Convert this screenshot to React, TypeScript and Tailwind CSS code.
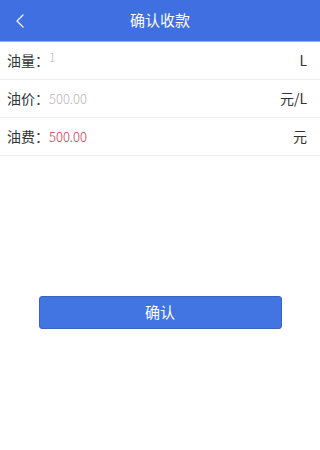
import { ChevronLeft } from "lucide-react";

const rows = [
  { label: "油量：", value: "1", unit: "L", tone: "text-[#b8b8b8]", lift: true },
  { label: "油价：", value: "500.00", unit: "元/L", tone: "text-[#b8b8b8]", lift: false },
  { label: "油费：", value: "500.00", unit: "元", tone: "text-[#c8354e]", lift: false },
];

export default function App() {
  return (
    <div
      className="min-h-[450px] w-full bg-white"
      style={{ fontFamily: '"Noto Sans CJK SC", "Noto Sans", sans-serif' }}
    >
      <header className="relative flex h-[42px] items-center justify-center border-b border-[#8fb0ee] bg-[#3f6fe0]">
        <button className="absolute left-1 top-0 flex h-full items-center px-1 text-white">
          <ChevronLeft size={24} strokeWidth={1.2} />
        </button>
        <h1 className="text-[15px] text-white">确认收款</h1>
      </header>

      <div className="flex flex-col">
        {rows.map((r) => (
          <div
            key={r.label}
            className="flex h-[38px] items-center border-b border-[#f0f0f0] pl-[7px] pr-[13px] text-[14px] text-[#333]"
          >
            <span className="shrink-0 whitespace-nowrap">{r.label}</span>
            <span
              className={`flex-1 font-light ${r.tone} ${r.lift ? "-translate-y-[4px] text-[12px]" : "text-[13px]"}`}
            >
              {r.value}
            </span>
            <span className="whitespace-nowrap">{r.unit}</span>
          </div>
        ))}
      </div>

      <div className="flex justify-center pt-[140px]">
        <button className="h-[33px] w-[243px] rounded-[3px] border border-[#3a63c4] bg-[#4274e2] text-[15px] text-white">
          确认
        </button>
      </div>
    </div>
  );
}
